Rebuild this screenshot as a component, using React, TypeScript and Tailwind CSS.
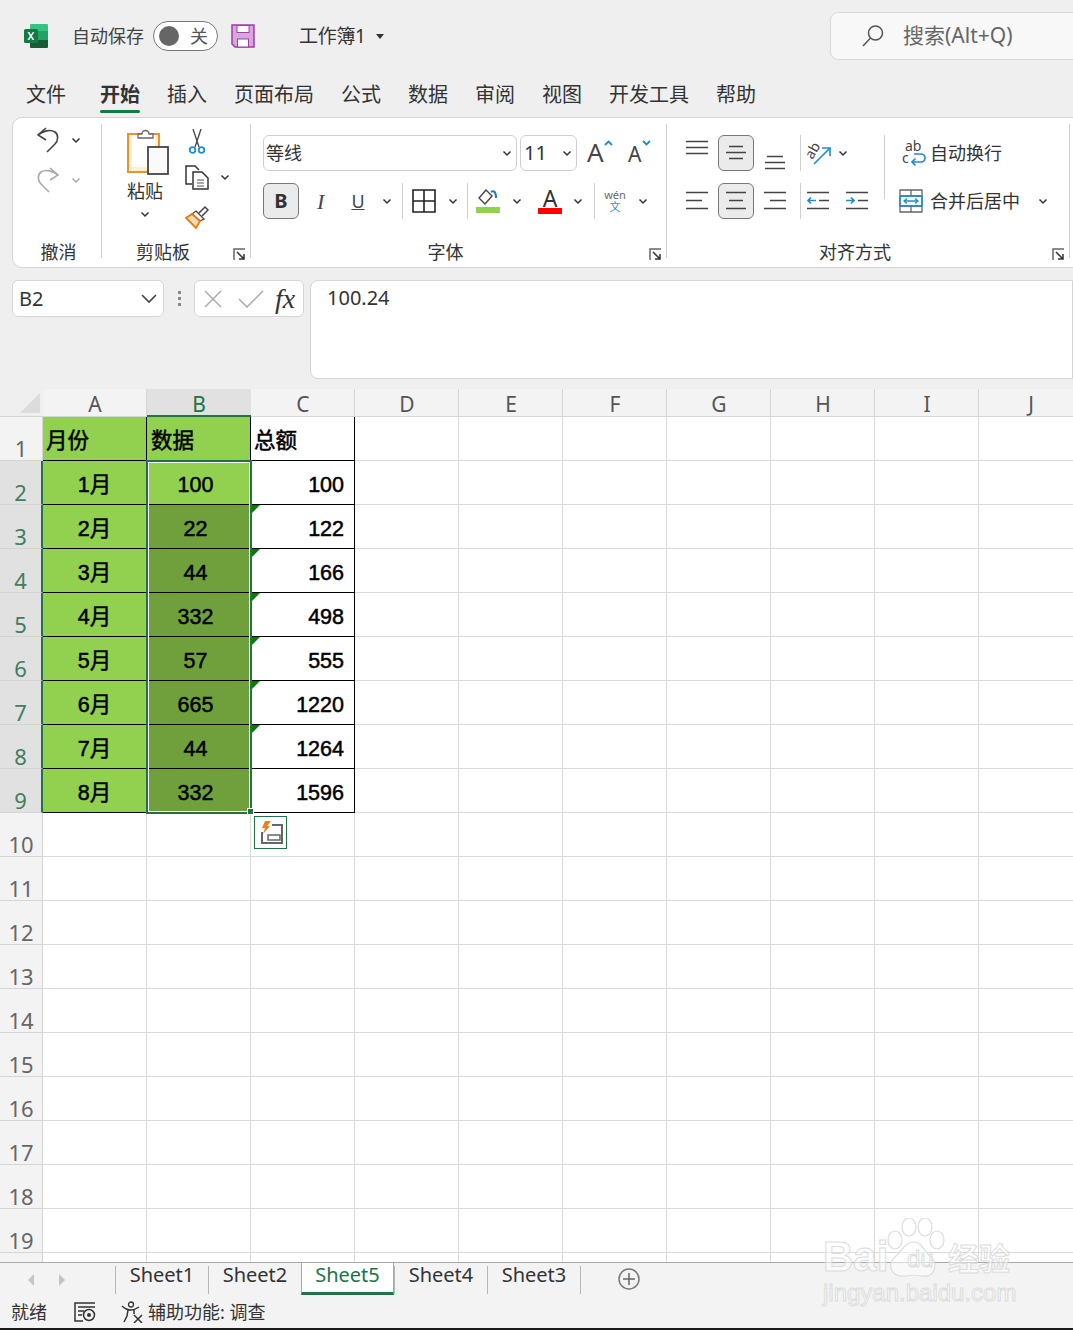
import type { ReactNode } from "react";

const columns = ["A", "B", "C", "D", "E", "F", "G", "H", "I", "J"];

const tableRows = [
  { month: "1月", value: "100", total: "100" },
  { month: "2月", value: "22", total: "122" },
  { month: "3月", value: "44", total: "166" },
  { month: "4月", value: "332", total: "498" },
  { month: "5月", value: "57", total: "555" },
  { month: "6月", value: "665", total: "1220" },
  { month: "7月", value: "44", total: "1264" },
  { month: "8月", value: "332", total: "1596" },
];

const menus = ["插入", "页面布局", "公式", "数据", "审阅", "视图", "开发工具", "帮助"];
const sheets = ["Sheet1", "Sheet2", "Sheet5", "Sheet4", "Sheet3"];

function Chevron({ className = "", color = "#333" }: { className?: string; color?: string }) {
  return (
    <svg width="10" height="7" viewBox="0 0 10 7" className={className} fill="none">
      <path d="M1.5 1.5 5 5l3.5-3.5" stroke={color} strokeWidth="1.5" />
    </svg>
  );
}

function Lines({ widths, gap = 8 }: { widths: [number, number][]; gap?: number }) {
  return (
    <svg width="24" height={gap * 2 + 4} viewBox={`0 0 24 ${gap * 2 + 4}`} fill="none">
      {widths.map(([x1, x2], i) => (
        <path key={i} d={`M${x1} ${1.5 + i * gap}H${x2}`} stroke="#444" strokeWidth="1.5" />
      ))}
    </svg>
  );
}

function Launcher() {
  return (
    <svg width="13" height="13" viewBox="0 0 13 13" fill="none" className="absolute right-[4px] bottom-[-3px]">
      <path d="M1 12V1h11" stroke="#666" strokeWidth="1.5" />
      <path d="M4 4l7 7M11 6v5H6" stroke="#333" strokeWidth="1.5" />
    </svg>
  );
}

function Divider({ className = "" }: { className?: string }) {
  return <div className={`w-px h-[36px] bg-[#cfcfcf] ${className}`} />;
}

function PressedBox({ children, className = "" }: { children: ReactNode; className?: string }) {
  return (
    <div className={`w-[36px] h-[36px] rounded-[6px] border border-[#777] bg-[#ebebeb] flex items-center justify-center ${className}`}>
      {children}
    </div>
  );
}

function RibbonGroup({ width, label, labelClass = "", launcher, children }: { width: number; label: string; labelClass?: string; launcher?: boolean; children: ReactNode }) {
  return (
    <div className="relative shrink-0 h-[134px] flex flex-col border-r border-[#cfcfcf]" style={{ width }}>
      <div className="flex-1 relative">{children}</div>
      <div className={`h-[30px] -mb-[9px] text-center text-[18px] leading-[30px] text-[#333] ${labelClass}`}>{label}</div>
      {launcher && <Launcher />}
    </div>
  );
}

function TitleBar() {
  return (
    <div className="h-[72px] flex items-center relative">
      <svg width="26" height="26" viewBox="0 0 26 26" className="ml-[23px]">
        <path d="M8 1h16a1 1 0 0 1 1 1v6H7V2a1 1 0 0 1 1-1Z" fill="#33c481" />
        <rect x="7" y="8" width="18" height="9" fill="#21a366" />
        <path d="M7 17h18v7a1 1 0 0 1-1 1H8a1 1 0 0 1-1-1Z" fill="#185c37" />
        <rect x="1" y="6" width="14" height="14" rx="1.5" fill="#107c41" />
        <path d="m4.500 9 2.400 4-2.500 4h1.900l1.600-2.800L9.500 17h1.900l-2.500-4 2.400-4H9.900L8 11.800 6.400 9Z" fill="#fff" />
      </svg>
      <span className="ml-[23px] text-[18px] text-[#444]">自动保存</span>
      <div className="ml-[9px] w-[65px] h-[30px] rounded-full border border-[#777] bg-white flex items-center pl-[5px]">
        <span className="w-[20px] h-[20px] rounded-full bg-[#666]" />
        <span className="ml-[11px] text-[18px] text-[#555]">关</span>
      </div>
      <svg width="24" height="24" viewBox="0 0 24 24" className="ml-[13px]" fill="none">
        <path d="M1 1h22v22H4l-3-3Z" fill="#d9a5dd" stroke="#a33ba8" strokeWidth="1.5" />
        <rect x="6" y="1.500" width="12" height="7" fill="#fff" stroke="#a33ba8" strokeWidth="1" />
        <rect x="6.500" y="15" width="11" height="8" fill="#fff" stroke="#a33ba8" strokeWidth="1" />
      </svg>
      <span className="ml-[44px] text-[19px] tracking-[-0.3px] text-[#333]">工作簿1</span>
      <span className="ml-[10px] w-0 h-0 border-x-[4.5px] border-x-transparent border-t-[5px] border-t-[#333]" />
      <div className="absolute left-[830px] top-[12px] w-[260px] h-[48px] rounded-[8px] border border-[#d9d9d9] bg-[#f8f8f8] flex items-center pl-[30px]">
        <svg width="24" height="24" viewBox="0 0 24 24" fill="none">
          <circle cx="14.500" cy="9" r="7" stroke="#555" strokeWidth="1.5" />
          <path d="M9.500 14 2 22" stroke="#555" strokeWidth="1.5" />
        </svg>
        <span className="ml-[18px] text-[21px] text-[#666]">搜索(Alt+Q)</span>
      </div>
    </div>
  );
}

function MenuBar() {
  return (
    <div className="h-[45px] flex items-start pl-[26px] gap-[27px] text-[20px] leading-[45px] text-[#333]">
      <span className="mr-[7px]">文件</span>
      <span className="relative font-bold">
        开始
        <span className="absolute left-0 right-0 top-[38px] h-[3px] rounded-sm bg-[#107c41]" />
      </span>
      {menus.map((m) => (
        <span key={m}>{m}</span>
      ))}
    </div>
  );
}

function UndoGroup() {
  return (
    <div className="pl-[23px] -mt-[2px]">
      <div className="flex items-center h-[36px]">
        <svg width="24" height="26" viewBox="0 0 24 26" fill="none">
          <path d="M10 1 2 8l8 5M2 8c5-4 12-6 17-3 4 3 3 9 0 12l-8 8" stroke="#444" strokeWidth="1.600" />
        </svg>
        <Chevron className="ml-[11px]" />
      </div>
      <div className="flex items-center h-[36px] mt-[4px]">
        <svg width="24" height="26" viewBox="0 0 24 26" fill="none">
          <path d="M14 1l8 7-8 5M22 8C17 4 10 2 5 5 1 8 2 14 5 17l8 8" stroke="#aaa" strokeWidth="1.600" />
        </svg>
        <Chevron className="ml-[11px]" color="#aaa" />
      </div>
    </div>
  );
}

function ClipboardGroup() {
  return (
    <div className="flex pl-[21px]">
      <div className="w-[44px] flex flex-col items-center pt-[3px]">
        <svg width="42" height="48" viewBox="0 0 42 48" fill="none" className="ml-[6px]">
          <rect x="1" y="7" width="31" height="38" fill="#fdf0d0" stroke="#e8932c" strokeWidth="2" />
          <rect x="5" y="8" width="23" height="32" fill="#fff" />
          <path d="M11 11V7h4a3.500 3.500 0 0 1 7 0h4v4Z" fill="#fff" stroke="#666" strokeWidth="1.300" />
          <rect x="21" y="20" width="20" height="27" fill="#fafafa" stroke="#444" strokeWidth="1.800" />
        </svg>
        <span className="text-[18px] leading-[24px] mt-[4px] text-[#333]">粘贴</span>
        <Chevron className="mt-[8px]" />
      </div>
      <div className="ml-[18px] flex flex-col pt-[5px]">
        <svg width="18" height="26" viewBox="0 0 18 26" fill="none" className="ml-[3px]">
          <path d="M5 0l6 18M13 0 7 18" stroke="#444" strokeWidth="1.300" />
          <circle cx="4.500" cy="21" r="2.800" stroke="#1e8cd0" strokeWidth="1.800" />
          <circle cx="13.500" cy="21" r="2.800" stroke="#1e8cd0" strokeWidth="1.800" />
        </svg>
        <div className="flex items-center mt-[10px]">
          <svg width="24" height="25" viewBox="0 0 24 25" fill="none">
            <path d="M7 19H1V1h9l4 4" stroke="#333" strokeWidth="1.500" />
            <path d="M8 7h9l6 6v11H8Z" fill="#fff" stroke="#333" strokeWidth="1.500" />
            <path d="M12 15h7M12 18h7M12 21h7" stroke="#555" />
          </svg>
          <Chevron className="ml-[11px]" />
        </div>
        <svg width="24" height="24" viewBox="0 0 24 24" fill="none" className="mt-[15px]">
          <path d="m14 8 6-6 3 3-6 6" stroke="#444" strokeWidth="1.500" />
          <path d="m11 6 8 8-4 2-8-7Z" fill="#fff" stroke="#444" strokeWidth="1.300" />
          <path d="M7 9 1 13l10 10 4-7Z" fill="#f8d9b8" stroke="#e87b0c" strokeWidth="1.800" />
        </svg>
      </div>
    </div>
  );
}

function FontGroup() {
  return (
    <div className="pl-[12px] pt-[11px]">
      <div className="flex items-center h-[36px]">
        <div className="w-[254px] h-[36px] rounded-[6px] border border-[#cfcfcf] flex items-center justify-between pl-[2px] pr-[4px] text-[18px] text-[#333]">
          等线
          <Chevron />
        </div>
        <div className="ml-[3px] w-[57px] h-[36px] rounded-[6px] border border-[#cfcfcf] flex items-center justify-between pl-[3px] pr-[4px] text-[20px] text-[#333]">
          11
          <Chevron />
        </div>
        <div className="ml-[10px] relative w-[24px] text-[26px] leading-none text-[#444] -mt-[2px]">
          A
          <svg width="9" height="6" viewBox="0 0 9 6" fill="none" className="absolute right-[-2px] top-[1px]">
            <path d="M1 5 4.500 1.500 8 5" stroke="#1e8cd0" strokeWidth="1.800" />
          </svg>
        </div>
        <div className="ml-[17px] relative w-[22px] text-[21px] leading-none text-[#444] pt-[2px]">
          A
          <svg width="9" height="6" viewBox="0 0 9 6" fill="none" className="absolute right-[-1px] top-[-2px]">
            <path d="M1 1l3.500 3.500L8 1" stroke="#1e8cd0" strokeWidth="1.800" />
          </svg>
        </div>
      </div>
      <div className="flex items-center h-[36px] mt-[12px]">
        <PressedBox className="text-[20px] font-bold text-[#333]">B</PressedBox>
        <span className="ml-[18px] w-[10px] text-[22px] italic [font-family:'Liberation_Serif',serif] text-[#444]">I</span>
        <span className="ml-[23px] w-[16px] text-center text-[18px] underline text-[#444]">U</span>
        <Chevron className="ml-[16px]" />
        <Divider className="ml-[10px]" />
        <svg width="24" height="24" viewBox="0 0 24 24" fill="none" className="ml-[9px]">
          <path d="M1 1h22v22H1ZM12 1v22M1 12h22" stroke="#222" strokeWidth="1.600" />
        </svg>
        <Chevron className="ml-[12px]" />
        <Divider className="ml-[9px]" />
        <div className="ml-[8px] w-[24px] flex flex-col items-center">
          <svg width="22" height="17" viewBox="0 0 22 17" fill="none">
            <path d="M9 1 2 9l6 6 7-8Z" stroke="#444" strokeWidth="1.400" />
            <path d="M14 3c3-2 5 0 5 6" stroke="#1e7cc0" strokeWidth="2" />
          </svg>
          <div className="w-[24px] h-[6px] bg-[#92d050] mt-[1px]" />
        </div>
        <Chevron className="ml-[12px]" />
        <div className="ml-[16px] w-[24px] flex flex-col items-center text-[#333]">
          <span className="text-[23px] leading-[20px] h-[19px]">A</span>
          <div className="w-[24px] h-[6px] bg-[#ff0000] mt-[1px]" />
        </div>
        <Chevron className="ml-[11px]" />
        <Divider className="ml-[11px]" />
        <div className="ml-[8px] w-[24px] flex flex-col items-center leading-[12px]">
          <span className="text-[11px] text-[#666]">wén</span>
          <span className="text-[11px] text-[#2a94d6]">文</span>
        </div>
        <Chevron className="ml-[11px]" />
      </div>
    </div>
  );
}

function AlignGroup() {
  return (
    <div className="pl-[18px] pt-[11px]">
      <div className="flex items-center h-[36px]">
        <div className="self-start pt-[5px]">
          <Lines widths={[[1, 23], [1, 23], [1, 23]]} gap={6} />
        </div>
        <PressedBox className="ml-[9px]">
          <Lines widths={[[5, 19], [2, 22], [5, 19]]} gap={6} />
        </PressedBox>
        <div className="ml-[9px] self-end">
          <Lines widths={[[4, 20], [2, 22], [2, 22]]} gap={6} />
        </div>
        <Divider className="ml-[13px]" />
        <svg width="26" height="24" viewBox="0 0 26 24" fill="none" className="ml-[4px] overflow-visible">
          <path d="M9 23 24 8M17 7h8v8" stroke="#1e8cd0" strokeWidth="1.600" />
          <text x="0" y="14" fontSize="14" fill="#444" transform="rotate(-60 8 10)">ab</text>
        </svg>
        <Chevron className="ml-[7px]" />
        <div className="ml-[36px] w-px h-[64px] bg-[#cfcfcf] mt-[28px]" />
        <svg width="24" height="26" viewBox="0 0 24 26" fill="none" className="ml-[17px] overflow-visible">
          <text x="3" y="11" fontSize="14" fill="#444">ab</text>
          <text x="0" y="23" fontSize="14" fill="#444">c</text>
          <path d="M12 14h7a4 4 0 0 1 0 8h-9m3.500-3.500L10 22l3.500 3.500" stroke="#1e8cd0" strokeWidth="1.700" />
        </svg>
        <span className="ml-[4px] text-[18px] text-[#333]">自动换行</span>
      </div>
      <div className="flex items-center h-[36px] mt-[12px]">
        <Lines widths={[[1, 23], [1, 17], [1, 23]]} gap={8} />
        <PressedBox className="ml-[9px]">
          <Lines widths={[[2, 22], [5, 19], [2, 22]]} gap={8} />
        </PressedBox>
        <div className="ml-[9px]">
          <Lines widths={[[1, 23], [7, 23], [1, 23]]} gap={8} />
        </div>
        <Divider className="ml-[13px]" />
        <svg width="24" height="20" viewBox="0 0 24 20" fill="none" className="ml-[5px]">
          <path d="M1 1.500h22M13 9.500h10M1 17.500h22" stroke="#444" strokeWidth="1.500" />
          <path d="M10 9.500H2m3-3-3 3 3 3" stroke="#1e8cd0" strokeWidth="1.700" />
        </svg>
        <svg width="24" height="20" viewBox="0 0 24 20" fill="none" className="ml-[15px]">
          <path d="M1 1.500h22M13 9.500h10M1 17.500h22" stroke="#444" strokeWidth="1.500" />
          <path d="M1 9.500h8m-3-3 3 3-3 3" stroke="#1e8cd0" strokeWidth="1.700" />
        </svg>
        <svg width="24" height="24" viewBox="0 0 24 24" fill="none" className="ml-[30px]">
          <path d="M1 1h22v22H1ZM1 7h22M1 17h22M12 1v6M12 17v6" stroke="#666" strokeWidth="1.300" />
          <path d="M1 7h22v10H1Z" stroke="#1e8cd0" strokeWidth="1.500" />
          <path d="M5 12h14M8 9.500 5 12l3 2.500M16 9.500l3 2.500-3 2.500" stroke="#1e8cd0" strokeWidth="1.300" />
        </svg>
        <span className="ml-[7px] text-[18px] text-[#333]">合并后居中</span>
        <Chevron className="ml-[18px]" />
      </div>
    </div>
  );
}

function Ribbon() {
  return (
    <div className="ml-[12px] h-[151px] w-[1100px] rounded-l-[10px] border border-[#d5d5d5] bg-white pt-[6px] flex items-start overflow-hidden">
      <RibbonGroup width={89} label="撤消" labelClass="pl-[3px]">
        <UndoGroup />
      </RibbonGroup>
      <RibbonGroup width={149} label="剪贴板" labelClass="pr-[26px]" launcher>
        <ClipboardGroup />
      </RibbonGroup>
      <RibbonGroup width={416} label="字体" labelClass="pr-[26px]" launcher>
        <FontGroup />
      </RibbonGroup>
      <RibbonGroup width={403} label="对齐方式" labelClass="pr-[26px]" launcher>
        <AlignGroup />
      </RibbonGroup>
    </div>
  );
}

function FormulaBar() {
  return (
    <div className="h-[121px] pl-[12px] pt-[12px] flex items-start">
      <div className="w-[152px] h-[37px] rounded-[6px] border border-[#d5d5d5] bg-white flex items-center justify-between pl-[6px] pr-[6px] text-[20px] text-[#333]">
        B2
        <svg width="16" height="10" viewBox="0 0 16 10" fill="none">
          <path d="m1 1 7 7 7-7" stroke="#444" strokeWidth="1.600" />
        </svg>
      </div>
      <div className="w-[30px] h-[37px] flex flex-col items-center justify-center gap-[3px]">
        <span className="w-[3px] h-[3px] bg-[#888]" />
        <span className="w-[3px] h-[3px] bg-[#888]" />
        <span className="w-[3px] h-[3px] bg-[#888]" />
      </div>
      <div className="w-[110px] h-[37px] rounded-[6px] border border-[#d5d5d5] bg-white flex items-center pl-[9px]">
        <svg width="18" height="18" viewBox="0 0 18 18" fill="none">
          <path d="m1 1 16 16M17 1 1 17" stroke="#aaa" strokeWidth="1.500" />
        </svg>
        <svg width="26" height="18" viewBox="0 0 26 18" fill="none" className="ml-[16px]">
          <path d="m1 9 8 8L25 1" stroke="#aaa" strokeWidth="1.500" />
        </svg>
        <span className="ml-[11px] text-[28px] italic leading-none text-[#333] [font-family:'Liberation_Serif',serif]">fx</span>
      </div>
      <div className="ml-[6px] flex-1 h-[99px] rounded-tl-[8px] rounded-bl-[8px] border border-[#d5d5d5] bg-white pl-[16px] text-[20px] leading-[34px] text-[#333]">
        100.24
      </div>
    </div>
  );
}

function HeaderRow() {
  return (
    <div className="flex h-[28px]">
      <div className="w-[43px] shrink-0 bg-[#efefef] flex items-end justify-end pr-[3px] pb-[3px] border-b border-[#d5d5d5]">
        <span className="w-0 h-0 border-l-[20px] border-l-transparent border-b-[20px] border-b-[#dcdcdc]" />
      </div>
      {columns.map((c) => (
        <div
          key={c}
          className={
            c === "B"
              ? "w-[104px] shrink-0 bg-[#e1e1e1] border-b-2 border-[#217346] text-center text-[21px] leading-[31px] text-[#217346]"
              : "w-[104px] shrink-0 bg-[#f3f3f3] border-r border-b border-[#d5d5d5] pl-[1px] text-center text-[21px] leading-[31px] text-[#555]"
          }
        >
          {c}
        </div>
      ))}
    </div>
  );
}

function RowHead({ n }: { n: number }) {
  const active = n >= 2 && n <= 9;
  return (
    <div
      className={
        active
          ? "w-[43px] shrink-0 bg-[#e1e1e1] border-r-2 border-[#217346] border-b border-b-[#d5d5d5] flex items-end justify-center text-[22px] leading-[24px] text-[#3f7f5f]"
          : "w-[43px] shrink-0 bg-[#f3f3f3] border-r border-b border-[#d5d5d5] flex items-end justify-center text-[22px] leading-[24px] text-[#666]"
      }
    >
      {n < 20 ? n : ""}
    </div>
  );
}

const cellFont = "[font-family:'Liberation_Sans','Noto_Sans_CJK_SC',sans-serif] text-[21.500px] text-black [-webkit-text-stroke:0.5px_black]";

function Sheet() {
  const blanks = columns.slice(3);
  return (
    <div className="relative h-[845px] overflow-hidden">
      <div className="flex h-[44px]">
        <RowHead n={1} />
        <div className={`w-[104px] shrink-0 bg-[#92d050] border-r border-b border-black pl-[3px] leading-[48px] ${cellFont}`}>月份</div>
        <div className={`w-[104px] shrink-0 bg-[#92d050] border-r border-b border-black pl-[4px] leading-[48px] ${cellFont}`}>数据</div>
        <div className={`w-[104px] shrink-0 bg-white border-r border-b border-black pl-[3px] leading-[48px] ${cellFont}`}>总额</div>
        {blanks.map((c) => (
          <div key={c} className="w-[104px] shrink-0 border-r border-b border-[#dadada]" />
        ))}
      </div>
      {tableRows.map((r, i) => (
        <div key={r.month} className="flex h-[44px]">
          <RowHead n={i + 2} />
          <div className={`w-[104px] shrink-0 bg-[#92d050] border-r border-b border-black text-center leading-[49px] ${cellFont}`}>{r.month}</div>
          <div className={`w-[104px] shrink-0 border-r border-b border-black pr-[6px] text-center leading-[49px] ${i === 0 ? "bg-[#92d050]" : "bg-[#70a03c]"} ${cellFont}`}>{r.value}</div>
          <div className={`relative w-[104px] shrink-0 bg-white border-r border-b border-black pr-[10px] text-right leading-[49px] ${cellFont}`}>
            {i >= 1 && i <= 6 && (
              <span className="absolute left-[1px] top-0 w-0 h-0 border-t-[8px] border-t-[#0b7a0b] border-r-[8px] border-r-transparent" />
            )}
            {r.total}
          </div>
          {blanks.map((c) => (
            <div key={c} className="w-[104px] shrink-0 border-r border-b border-[#dadada]" />
          ))}
        </div>
      ))}
      {Array.from({ length: 11 }, (_, i) => i + 10).map((n) => (
        <div key={n} className="flex h-[44px]">
          <RowHead n={n} />
          {columns.map((c) => (
            <div key={c} className="w-[104px] shrink-0 border-r border-b border-[#dadada]" />
          ))}
        </div>
      ))}
      {/* selection outline + fill handle */}
      <div className="absolute left-[146px] top-[43px] w-[106px] h-[354px] border-2 border-[#217346] outline outline-1 -outline-offset-3 outline-white" />
      <span className="absolute left-[247px] top-[391px] w-[7px] h-[7px] bg-[#217346] border border-white" />
      <div className="absolute left-[254px] top-[399px] w-[33px] h-[33px] border border-[#217346] bg-white flex items-center justify-center">
        <svg width="26" height="26" viewBox="0 0 26 26" fill="none">
          <path d="M4 12v11h20V5H14" stroke="#666" strokeWidth="2" />
          <path d="M10 15h12v5H10Z" stroke="#666" strokeWidth="1.500" />
          <path d="M7 1h6L9 6h3l-7 8 2-6H4Z" fill="#e8821c" />
        </svg>
      </div>
    </div>
  );
}

function SheetTabs() {
  return (
    <div className="h-[34px] bg-[#f3f3f3] border-t border-[#a8a8a8] flex items-stretch">
      <div className="w-[115px] flex items-center pl-[28px] gap-[25px]">
        <span className="w-0 h-0 border-y-[6px] border-y-transparent border-r-[6px] border-r-[#c4c4c4]" />
        <span className="w-0 h-0 border-y-[6px] border-y-transparent border-l-[6px] border-l-[#c4c4c4]" />
      </div>
      {sheets.map((s) => (
        <div
          key={s}
          className={
            s === "Sheet5"
              ? "w-[93px] h-[32px] bg-white border-x border-[#a8a8a8] border-b-[3px] border-b-[#217346] text-center text-[20px] leading-[24px] text-[#217346]"
              : "w-[93px] h-[28px] mt-[3px] border-l border-[#b5b5b5] text-center text-[20px] leading-[18px] text-[#333]"
          }
        >
          {s}
        </div>
      ))}
      <div className="w-px h-[28px] mt-[3px] bg-[#b5b5b5]" />
      <svg width="22" height="22" viewBox="0 0 22 22" fill="none" className="ml-[37px] mt-[5px]">
        <circle cx="11" cy="11" r="10" stroke="#777" strokeWidth="1.500" />
        <path d="M11 5v12M5 11h12" stroke="#666" strokeWidth="1.500" />
      </svg>
    </div>
  );
}

function StatusBar() {
  return (
    <div className="h-[32px] bg-[#f3f3f3] flex items-center pl-[11px] text-[18px] text-[#333]">
      <span>就绪</span>
      <svg width="22" height="20" viewBox="0 0 22 20" fill="none" className="ml-[27px]">
        <path d="M21 1H1v18h8M4 5h17M4 9h6M4 13h4" stroke="#333" strokeWidth="1.500" />
        <circle cx="15" cy="13" r="5.500" stroke="#333" strokeWidth="1.500" />
        <circle cx="15" cy="13" r="2" fill="#333" />
      </svg>
      <svg width="22" height="22" viewBox="0 0 22 22" fill="none" className="ml-[25px]">
        <circle cx="10" cy="3.500" r="2.500" stroke="#333" strokeWidth="1.300" />
        <path d="M1 5c3 3 6 4 9 4s5-1 8-3M7 9l-1 6-3 6M13 9l0 4" stroke="#333" strokeWidth="1.500" />
        <path d="m13 14 8 8M21 14l-8 8" stroke="#333" strokeWidth="1.500" />
      </svg>
      <span className="ml-[5px]">辅助功能: 调查</span>
    </div>
  );
}

function Watermark() {
  const outline = "[-webkit-text-stroke:1px_#dcdcdc] text-white/50 whitespace-nowrap";
  return (
    <div className="absolute left-[820px] top-[1212px] w-[200px] h-[96px] pointer-events-none [font-family:'Liberation_Sans','Noto_Sans_CJK_SC',sans-serif]">
      <svg width="70" height="62" viewBox="0 0 70 62" fill="none" className="absolute left-[59px] top-[6px]">
        <g stroke="#dcdcdc" strokeWidth="1.200" fill="#ffffff" fillOpacity="0.5">
          <ellipse cx="16" cy="22" rx="7" ry="9" />
          <ellipse cx="30" cy="9" rx="7" ry="9" />
          <ellipse cx="46" cy="9" rx="7" ry="9" />
          <ellipse cx="58" cy="22" rx="7" ry="9" />
          <path d="M35 24c8 0 10 10 18 16 6 6 3 20-10 18-4-1-12-1-16 0C12 60 8 46 15 40c8-6 10-16 20-16Z" />
        </g>
      </svg>
      <span className={`absolute left-[3px] top-[20px] text-[42px] leading-[50px] font-bold ${outline}`}>Bai</span>
      <span className={`absolute left-[87px] top-[32px] text-[24px] leading-[30px] ${outline}`}>du</span>
      <span className={`absolute left-[128px] top-[28px] text-[31px] leading-[40px] font-bold ${outline}`}>经验</span>
      <span className={`absolute left-[3px] top-[67px] text-[24px] leading-[28px] ${outline}`}>jingyan.baidu.com</span>
    </div>
  );
}

export default function App() {
  return (
    <div className="relative w-[1073px] h-[1330px] overflow-hidden bg-[#efefef] [font-family:'Noto_Sans','Noto_Sans_CJK_SC',sans-serif]">
      <TitleBar />
      <MenuBar />
      <Ribbon />
      <FormulaBar />
      <div className="bg-white">
        <HeaderRow />
        <Sheet />
      </div>
      <SheetTabs />
      <StatusBar />
      <div className="h-[2px] bg-[#1a1a1a]" />
      <Watermark />
    </div>
  );
}
